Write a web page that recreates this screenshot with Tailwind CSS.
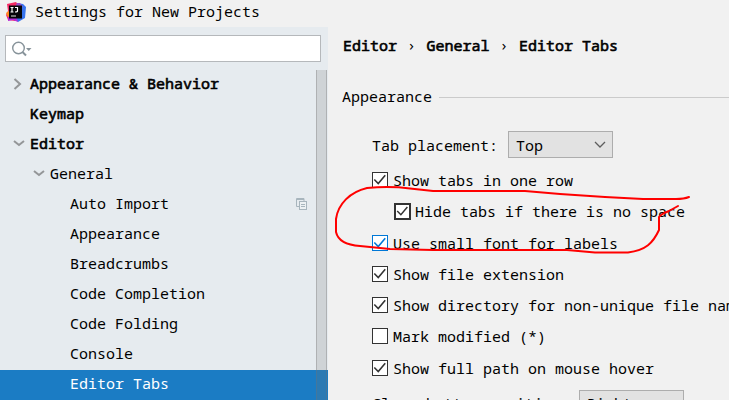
<!DOCTYPE html>
<html lang="en">
<head>
<meta charset="utf-8">
<title>Settings for New Projects</title>
<script src="https://cdn.jsdelivr.net/npm/@tailwindcss/browser@4"></script>
</head>
<body class="w-[729px] h-[400px] overflow-hidden bg-[#f1f1f1] text-black text-[15px] leading-[30px] whitespace-nowrap font-['Noto_Sans_Mono','Noto_Mono','Droid_Sans_Mono','DejaVu_Sans_Mono',monospace]">
<svg class="hidden"><defs>
<path id="tick" d="M1.500 7.500 L6 12 L14 2.500" fill="none" stroke-width="1.8"/>
<path id="down" d="M1 1 L6 5 L11 1" fill="none" stroke="#949698" stroke-width="2"/>
</defs></svg>
<div class="relative flex h-[400px] flex-col overflow-hidden">
<header class="flex h-[27px] shrink-0 items-center pl-[6px]">
<svg class="mt-[-3px] h-5 w-5 shrink-0" viewBox="0 0 20 20">
<path d="M1 2 L10 0 L14 5 L9 19 L2 18 L0 13 L2 9Z" fill="#f52c66"/>
<path d="M0 11 L4 8 L5 15 L2 15Z" fill="#ff8b20"/>
<path d="M11 1 L17 2 L20 5 L19 16 L12 20 L7 16Z" fill="#3773ee"/>
<path d="M2 15 L10 14 L12 20 L7 18 L2 19Z" fill="#b62bd7"/>
<path d="M11 1 L14 1 L17 5 L10 6Z" fill="#9750c9"/>
<rect x="3" y="3.500" width="13" height="13" fill="#050508"/>
<path d="M4.500 5.500h3M6 5.500v4.500M4.500 10h3M9 5.500h2.500v3.500q0 1-2.500 1" fill="none" stroke="#fff" stroke-width="1.2"/>
<path d="M5 14h5" stroke="#ddd" stroke-width="1"/>
</svg>
<h1 class="-mt-[5px] ml-[9px]">Settings for New Projects</h1>
</header>
<div class="flex min-h-0 flex-1">
<aside class="flex w-[328px] shrink-0 flex-col bg-[#e6ebef]">
<div class="mt-2 mb-2 ml-[5px] flex h-[27px] w-[316px] shrink-0 items-center border border-[#b5b8bb] bg-white pl-[5px]">
<svg class="h-[18px] w-[24px]" viewBox="0 0 24 18" fill="none" stroke="#87939a"><circle cx="7.5" cy="8" r="5.8" stroke-width="1.4"/><path d="M11.5 12 L15 15.5" stroke-width="2"/><path d="M15 8 H20.500 L17.750 11Z" fill="#87939a" stroke="none"/></svg>
</div>
<div class="relative flex h-[330px] flex-col">
<nav class="flex flex-col leading-[27px] [&>div]:flex [&>div]:h-[30px] [&>div]:shrink-0 [&>div]:pl-[70px]">
<div class="[-webkit-text-stroke:0.6px_black] !pl-[13px]"><svg class="mt-2 mr-[8px] h-[12px] w-[9px]" viewBox="0 0 9 12"><path d="M1.500 1 L7 6 L1.500 11" fill="none" stroke="#949698" stroke-width="2"/></svg>Appearance &amp; Behavior</div>
<div class="[-webkit-text-stroke:0.6px_black] !pl-[30px]">Keymap</div>
<div class="[-webkit-text-stroke:0.6px_black] !pl-[13px]"><svg class="mt-[10px] mr-[5px] h-[7px] w-[12px]" viewBox="0 0 12 7"><use href="#down"/></svg>Editor</div>
<div class="!pl-[33px]"><svg class="mt-[10px] mr-[5px] h-[7px] w-[12px]" viewBox="0 0 12 7"><use href="#down"/></svg>General</div>
<div>Auto Import<svg class="mt-2 mr-[21px] ml-auto h-[12px] w-[11px]" viewBox="0 0 11 12"><path d="M3 8.500 H0.500 V0.500 H8 V3" fill="none" stroke="#a8b5bd"/><path d="M1 1.500H8" stroke="#a8b5bd"/><rect x="3.500" y="3.500" width="7" height="8" fill="#edf1f3" stroke="#a8b5bd"/><path d="M5 6.500h4M5 8.500h4" stroke="#a8b5bd"/></svg></div>
<div>Appearance</div>
<div>Breadcrumbs</div>
<div>Code Completion</div>
<div>Code Folding</div>
<div>Console</div>
<div class="bg-[#1b7cc4] text-white">Editor Tabs</div>
</nav>
<div class="absolute top-0 right-[1px] h-full w-[11px] border-r border-l border-[#737373]/35 bg-[#737373]/20"></div>
</div>
</aside>
<main class="flex min-w-0 flex-1 flex-col overflow-hidden leading-5">
<h2 class="mt-[8px] ml-[15px] h-5 [-webkit-text-stroke:0.6px_black]">Editor<span class="inline-block w-[29.500px] pl-[10px] [-webkit-text-stroke:0px]">›</span>General<span class="inline-block w-[29.500px] pl-[10px] [-webkit-text-stroke:0px]">›</span>Editor Tabs</h2>
<div class="mt-[32px] ml-[14px] flex h-5 shrink-0 items-center"><span class="-mt-[3px]">Appearance</span><span class="ml-[7px] h-px flex-1 bg-[#cbcbcb]"></span></div>
<div class="mt-[24px] ml-[44px] flex h-[27px] shrink-0 items-center"><span class="w-[136px]">Tab placement:</span><div class="flex h-[27px] w-[105px] items-center border border-[#adadad] bg-[#e2e2e2] pl-[7px]"><span>Top</span><svg class="mr-[6px] ml-auto h-[7px] w-[12px]" viewBox="0 0 12 7"><path d="M1 1 L6 6 L11 1" fill="none" stroke="#5d5d5d" stroke-width="1.300"/></svg></div></div>
<div class="mt-[14px] ml-[44px] flex shrink-0 flex-col [&>label]:flex [&>label]:h-[31.300px] [&>label]:gap-[5px] [&>label]:leading-[17px] [&_svg]:h-4 [&_svg]:w-4 [&_svg]:shrink-0 [&_svg]:border [&_svg]:border-[#333] [&_svg]:bg-white [&_svg]:stroke-[#333]">
<label><svg viewBox="0 0 16 16"><use href="#tick"/></svg>Show tabs in one row</label>
<label class="ml-[22px]"><svg class="!h-[17px] !w-[17px] !border-2" viewBox="0 0 16 16"><use href="#tick"/></svg><span class="-ml-px">Hide tabs if there is no space</span></label>
<label><svg class="!border-[#0078d7] !stroke-[#0078d7]" viewBox="0 0 16 16"><use href="#tick"/></svg>Use small font for labels</label>
<label><svg viewBox="0 0 16 16"><use href="#tick"/></svg>Show file extension</label>
<label><svg viewBox="0 0 16 16"><use href="#tick"/></svg>Show directory for non-unique file names</label>
<label><svg viewBox="0 0 16 16"></svg>Mark modified (*)</label>
<label><svg viewBox="0 0 16 16"><use href="#tick"/></svg>Show full path on mouse hover</label>
</div>
<div class="-mt-[1px] ml-[44px] flex h-[27px] shrink-0 items-center"><span class="-mt-[2px] w-[207px]">Close button position:</span><div class="flex h-[27px] w-[105px] items-center border border-[#adadad] bg-[#e2e2e2] pl-[7px]"><span class="-mt-[2px]">Right</span></div></div>
</main>
</div>
<svg class="pointer-events-none absolute inset-0" width="729" height="400" fill="none" stroke="#ff0000" stroke-width="2" stroke-linecap="round" stroke-linejoin="round"><path d="M689 197 Q684 199 676 199 H643 L605 197 L560 194 L525 191 H433 L410 188.500 Q390 186 367 188 C350 192 338 204 336 219 V232 C338 241 346 245 360 246 L390 249 L433 250 H567 L595 252.500 H628 C646 250 653 243 659 230 V217 Q661 214 669 211 L678 206"/></svg>
</div>
</body>
</html>
